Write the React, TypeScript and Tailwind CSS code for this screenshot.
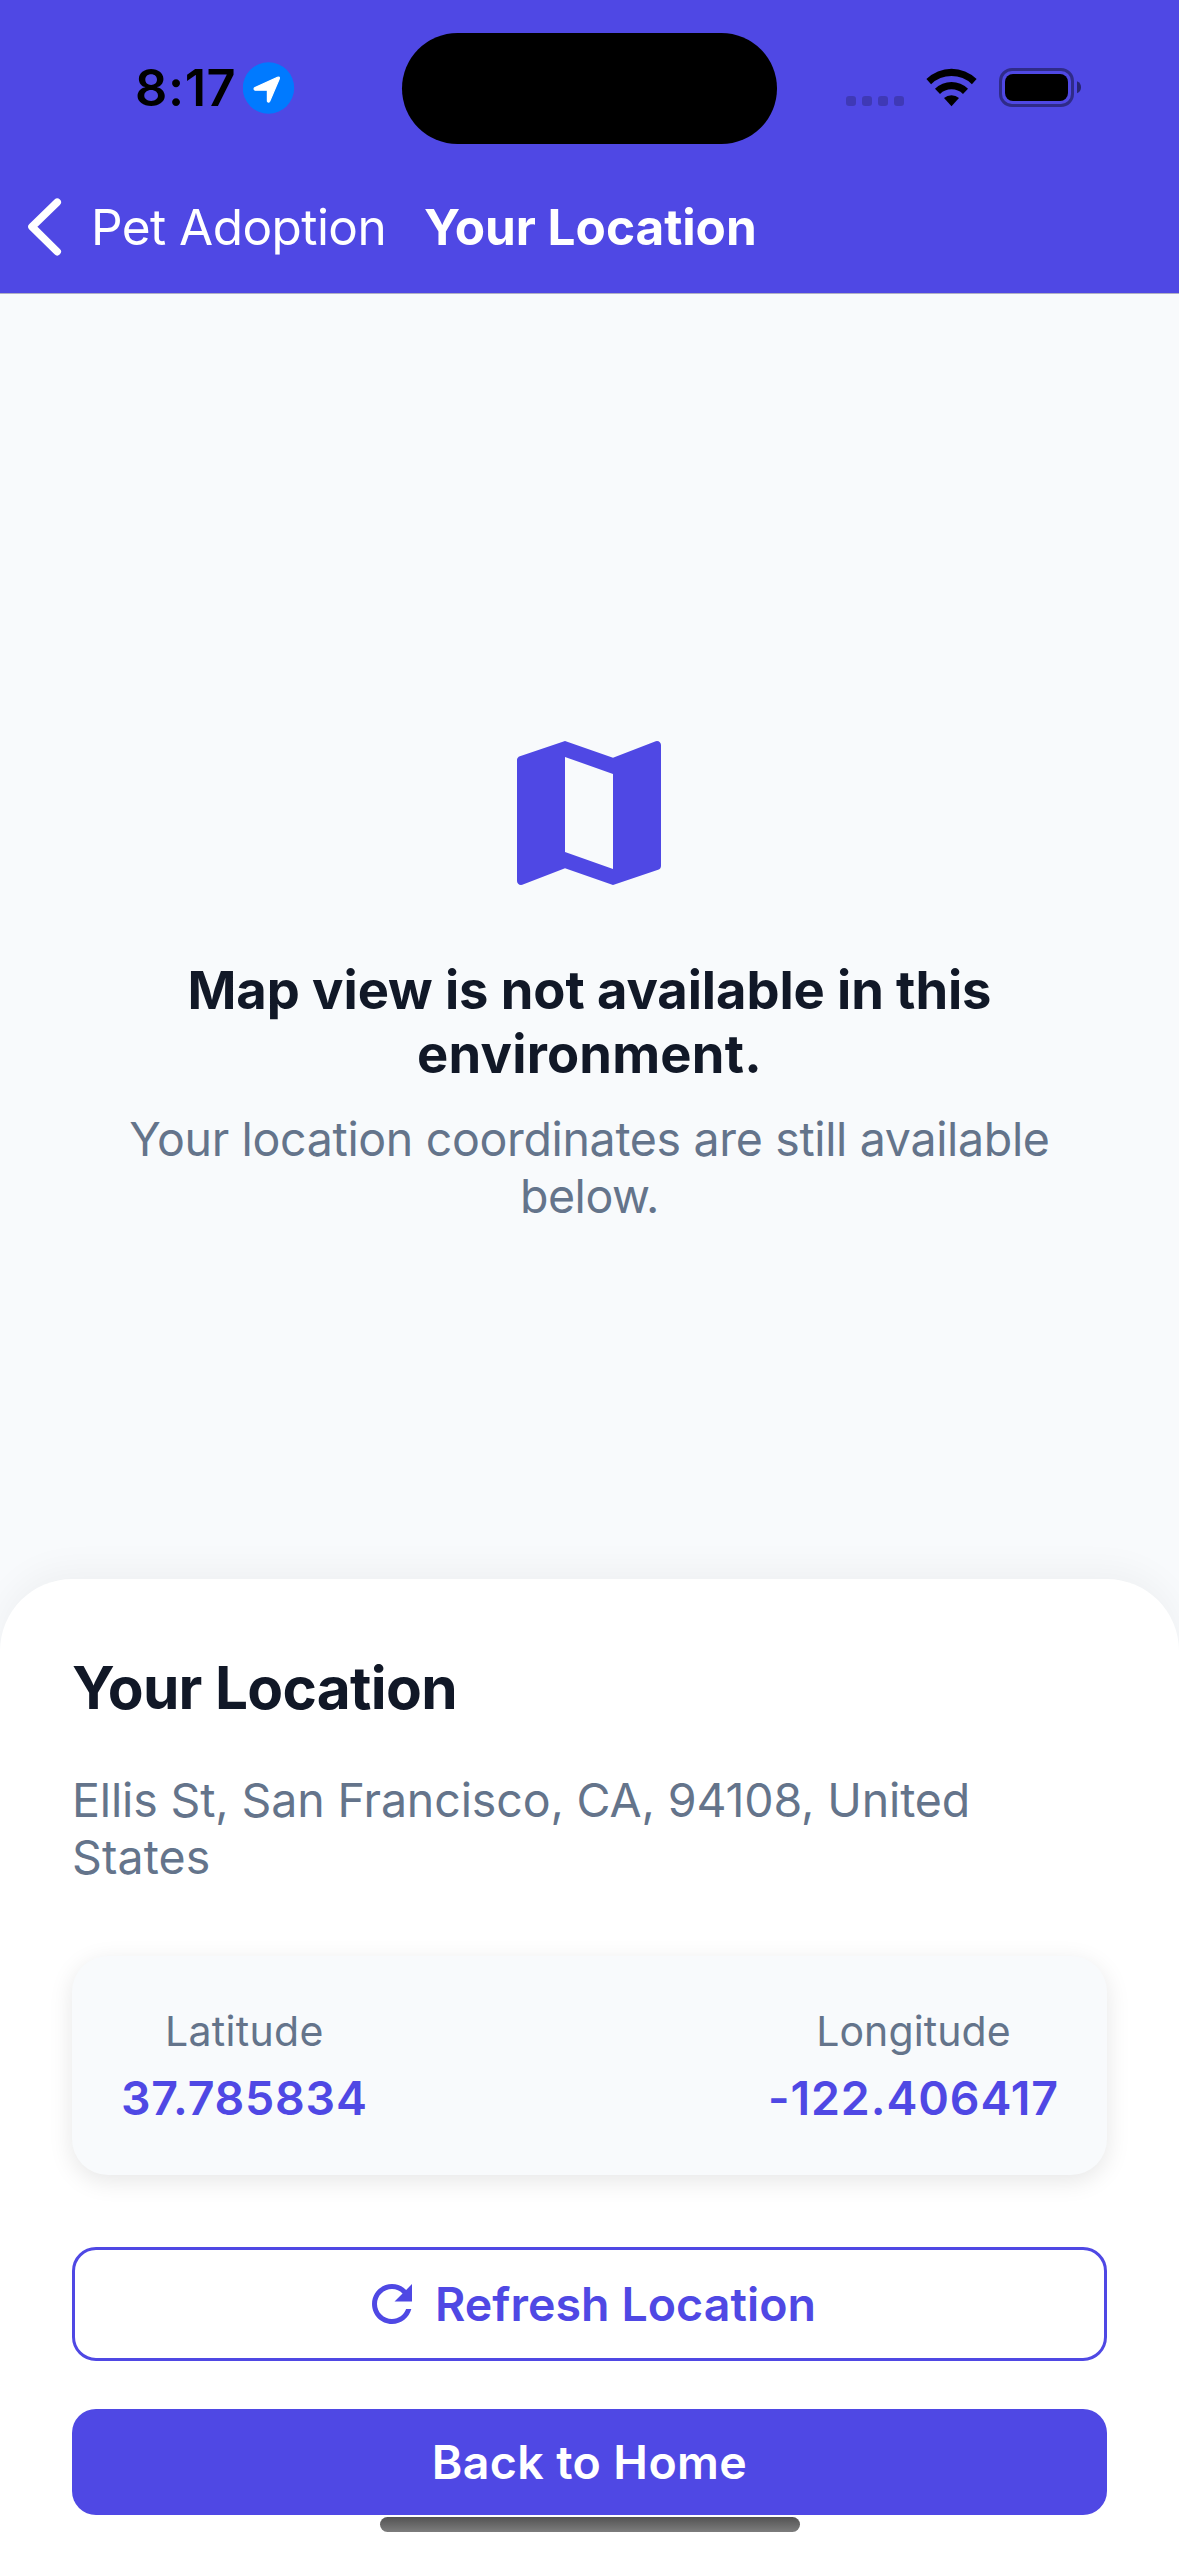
function StatusBar() {
  return (
    <div className="flex h-[162px] items-start text-black">
      <div className="mt-[58px] flex h-[60px] w-[402px] items-center pl-[135px]">
        <span className="w-[108px] text-[50.5px] leading-[60px] font-semibold tracking-[0.6px]">8:17</span>
        <svg className="h-[52px] w-[52px]" viewBox="0 0 52 52">
          <circle cx="25.5" cy="26" r="25.7" fill="#007aff" />
          <path
            d="M12 25.6 L34.5 15.2 Q37 14.4 36.2 17 L26.7 39.2 Q25.6 41 24.4 39.2 V28.2 H12.2 Q10 27 12 25.6Z"
            fill="#fff"
            stroke="#fff"
            strokeWidth="1.2"
            strokeLinejoin="round"
          />
        </svg>
      </div>
      <div className="mt-[33.4px] h-[110.8px] w-[375px] rounded-full bg-black" />
      <div className="mt-[68px] flex h-[40px] flex-1 items-start pl-[69px]">
        <div className="mt-7 flex gap-[6px]">
          <i className="h-[10px] w-[10px] rounded-[3px] bg-black/20" />
          <i className="h-[10px] w-[10px] rounded-[3px] bg-black/20" />
          <i className="h-[10px] w-[10px] rounded-[3px] bg-black/20" />
          <i className="h-[10px] w-[10px] rounded-[3px] bg-black/20" />
        </div>
        <svg className="ml-[22px] h-[40px] w-[52px]" viewBox="0 0 52 40">
          <path d="M0.4 11 A36 36 0 0 1 50.6 11 L45.9 16.2 A29.3 29.3 0 0 0 5.1 16.2Z" />
          <path d="M9 20.8 A23.6 23.6 0 0 1 42 20.8 L37 26 A16.6 16.6 0 0 0 14 26Z" />
          <path d="M18 30 A11.5 11.5 0 0 1 33 30 L25.5 38.2Z" />
        </svg>
        <svg className="ml-[21px] h-[40px] w-[84px]" viewBox="0 0 84 40">
          <rect x="1.5" y="1.5" width="72" height="36" rx="11.5" fill="none" stroke="#000" strokeOpacity="0.4" strokeWidth="3" />
          <rect x="6" y="6" width="63" height="27" rx="8" />
          <path d="M78 13.3 Q82 15 82 19.3 Q82 23.6 78 25.3Z" fillOpacity="0.5" />
        </svg>
      </div>
    </div>
  );
}

function NavBar() {
  return (
    <div className="flex h-[131px] items-center pb-px pl-[27px] text-white">
      <svg className="h-[60px] w-[36px]" viewBox="0 0 36 60">
        <path d="M30.2 5.2 L5 29.8 L30.2 54.6" fill="none" stroke="#fff" strokeWidth="7.6" strokeLinecap="round" strokeLinejoin="round" />
      </svg>
      <span className="ml-[28px] w-[333px] text-[49.5px] leading-[60px] tracking-[-0.56px] whitespace-nowrap">Pet Adoption</span>
      <span className="text-[49.5px] leading-[60px] font-bold tracking-[-0.04px] whitespace-nowrap">Your Location</span>
    </div>
  );
}

function MapPlaceholder() {
  return (
    <div className="flex h-[1285px] flex-col items-center pt-[423px] text-center">
      <svg className="mr-px h-48 w-48 shrink-0" viewBox="0 0 24 24" fill="#4f48e4">
        <path d="M20.5 3l-.16.03L15 5.1 9 3 3.36 4.9c-.21.07-.36.25-.36.48V20.5c0 .28.22.5.5.5l.16-.03L9 18.9l6 2.1 5.64-1.9c.21-.07.36-.25.36-.48V3.5c0-.28-.22-.5-.5-.5zM15 19l-6-2.11V5l6 2.11V19z" />
      </svg>
      <h1 className="mt-[49px] w-[960px] text-[52.5px] leading-[64px] font-bold tracking-[-0.09px] text-[#111827]">
        Map view is not available in this
        <br />
        <span className="tracking-[0.2px]">environment.</span>
      </h1>
      <p className="mt-[25px] w-[1000px] text-[46.5px] leading-[57px] tracking-[-0.34px] text-[#64748b]">
        Your location coordinates are still available
        <br />
        <span className="tracking-[-0.5px]">below.</span>
      </p>
    </div>
  );
}

function LocationSheet() {
  return (
    <section className="flex h-[977px] flex-col rounded-t-[72px] bg-white px-[72px] pt-[72px] shadow-[0_-9px_36px_rgba(0,0,0,0.045)]">
      <h2 className="text-[58.5px] leading-[73px] font-bold tracking-[-0.68px] text-[#111827]">Your Location</h2>
      <p className="mt-12 text-[46.5px] leading-[57px] tracking-[-0.13px] text-[#64748b]">
        Ellis St, San Francisco, CA, 94108, United
        <br />
        <span className="tracking-[0.1px]">States</span>
      </p>
      <div className="mt-[70px] flex h-[219px] shrink-0 justify-between rounded-[36px] bg-[#f8fafc] px-12 pt-[50px] shadow-[0_6px_24px_rgba(0,0,0,0.1)]">
        <div className="flex flex-col items-center pl-px">
          <span className="text-[41px] leading-[50px] tracking-[0.3px] text-[#64748b]">Latitude</span>
          <span className="mt-[14px] text-[46.5px] leading-[57px] font-semibold tracking-[0.75px] text-[#4f48e4]">37.785834</span>
        </div>
        <div className="flex flex-col items-center">
          <span className="text-[41px] leading-[50px] tracking-[0.1px] text-[#64748b]">Longitude</span>
          <span className="mt-[14px] text-[46.5px] leading-[57px] font-semibold tracking-[0.88px] text-[#4f48e4]">-122.406417</span>
        </div>
      </div>
      <button className="mt-[72px] flex h-[114px] shrink-0 items-center justify-center gap-[13px] rounded-3xl border-[3px] border-[#4f48e4] pr-px text-[#4f48e4]">
        <svg className="h-[60px] w-[60px]" viewBox="0 0 24 24" fill="currentColor">
          <path d="M17.65 6.35C16.2 4.9 14.21 4 12 4c-4.42 0-7.99 3.58-7.99 8s3.57 8 7.99 8c3.73 0 6.84-2.55 7.73-6h-2.08c-.82 2.33-3.04 4-5.65 4-3.31 0-6-2.69-6-6s2.69-6 6-6c1.66 0 3.14.69 4.22 1.78L13 11h7V4l-2.35 2.35z" />
        </svg>
        <span className="text-[46.5px] leading-[57px] font-semibold tracking-[0.06px]">Refresh Location</span>
      </button>
      <button className="mt-12 h-[106px] shrink-0 rounded-3xl bg-[#4f48e4] text-[46.5px] leading-[106px] font-semibold tracking-[0.37px] text-white">
        Back to Home
      </button>
      <div className="mt-[2px] h-[15px] w-[420px] shrink-0 self-center rounded-full bg-linear-to-b from-[#535353] to-[#7d7d7d]" />
    </section>
  );
}

export default function App() {
  return (
    <div className="h-[2556px] w-[1179px] overflow-hidden bg-[#f8fafc] font-['Inter',sans-serif]">
      <header className="h-[294px] border-b border-[#b0b0c4] bg-[#4f48e4]">
        <StatusBar />
        <NavBar />
      </header>
      <MapPlaceholder />
      <LocationSheet />
    </div>
  );
}
